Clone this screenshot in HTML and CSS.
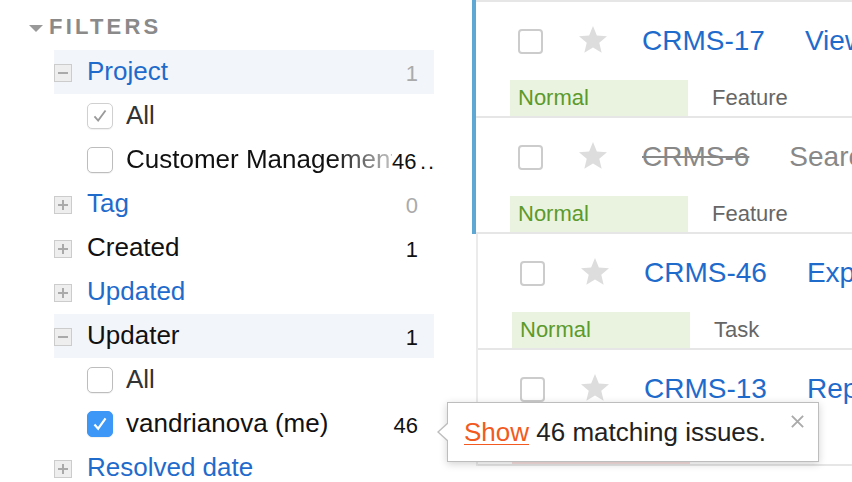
FILE: index.html
```html
<!DOCTYPE html>
<html>
<head>
<meta charset="utf-8">
<link rel="stylesheet" href="styles.css">
</head>
<body>
<div class="page">
  <aside class="filters">
    <div class="filters-head"><span class="caret"></span><span class="filters-title">Filters</span></div>
    <ul class="facets">
      <li class="facet open">
        <svg class="tog" viewBox="0 0 18 18"><rect x="0.5" y="0.5" width="17" height="17" fill="#eeeeee" stroke="#cccccc"/><rect x="4" y="8" width="10" height="2" fill="#aaaaaa"/></svg>
        <span class="facet-name link">Project</span><span class="count muted">1</span>
      </li>
      <li class="opt">
        <span class="cb cb-gray"><svg viewBox="0 0 26 26"><path d="M7 13.5l4 4.5 8-11" fill="none" stroke="#9a9a9a" stroke-width="2"/></svg></span>
        <span class="opt-name grey">All</span>
      </li>
      <li class="opt">
        <span class="cb"></span>
        <span class="opt-name fade">Customer Management</span><span class="count">46</span><span class="dots">..</span>
      </li>
      <li class="facet">
        <svg class="tog" viewBox="0 0 18 18"><rect x="0.5" y="0.5" width="17" height="17" fill="#eeeeee" stroke="#cccccc"/><rect x="4" y="8" width="10" height="2" fill="#aaaaaa"/><rect x="8" y="4" width="2" height="10" fill="#aaaaaa"/></svg>
        <span class="facet-name link">Tag</span><span class="count muted">0</span>
      </li>
      <li class="facet">
        <svg class="tog" viewBox="0 0 18 18"><rect x="0.5" y="0.5" width="17" height="17" fill="#eeeeee" stroke="#cccccc"/><rect x="4" y="8" width="10" height="2" fill="#aaaaaa"/><rect x="8" y="4" width="2" height="10" fill="#aaaaaa"/></svg>
        <span class="facet-name">Created</span><span class="count">1</span>
      </li>
      <li class="facet">
        <svg class="tog" viewBox="0 0 18 18"><rect x="0.5" y="0.5" width="17" height="17" fill="#eeeeee" stroke="#cccccc"/><rect x="4" y="8" width="10" height="2" fill="#aaaaaa"/><rect x="8" y="4" width="2" height="10" fill="#aaaaaa"/></svg>
        <span class="facet-name link">Updated</span>
      </li>
      <li class="facet open">
        <svg class="tog" viewBox="0 0 18 18"><rect x="0.5" y="0.5" width="17" height="17" fill="#eeeeee" stroke="#cccccc"/><rect x="4" y="8" width="10" height="2" fill="#aaaaaa"/></svg>
        <span class="facet-name">Updater</span><span class="count">1</span>
      </li>
      <li class="opt">
        <span class="cb"></span>
        <span class="opt-name grey">All</span>
      </li>
      <li class="opt">
        <span class="cb cb-blue"><svg viewBox="0 0 26 26"><path d="M7 13.5l4 4.5 8-11" fill="none" stroke="#ffffff" stroke-width="2.4"/></svg></span>
        <span class="opt-name">vandrianova (me)</span><span class="count">46</span>
      </li>
      <li class="facet">
        <svg class="tog" viewBox="0 0 18 18"><rect x="0.5" y="0.5" width="17" height="17" fill="#eeeeee" stroke="#cccccc"/><rect x="4" y="8" width="10" height="2" fill="#aaaaaa"/><rect x="8" y="4" width="2" height="10" fill="#aaaaaa"/></svg>
        <span class="facet-name link">Resolved date</span>
      </li>
    </ul>
  </aside>

  <main class="issues">
    <div class="issue selected first">
      <div class="issue-body">
        <div class="issue-top">
          <span class="icb"></span>
          <svg class="star" viewBox="0 0 24 24"><polygon points="12,1.5 14.9,8.6 22.5,9.2 16.7,14.1 18.5,21.6 12,17.6 5.5,21.6 7.3,14.1 1.5,9.2 9.1,8.6" fill="#dddddd"/></svg>
          <span class="key">CRMS-17</span><span class="summary">View customer list</span>
        </div>
        <div class="issue-meta"><span class="prio">Normal</span><span class="type">Feature</span></div>
      </div>
    </div>
    <div class="issue selected">
      <div class="issue-body">
        <div class="issue-top">
          <span class="icb"></span>
          <svg class="star" viewBox="0 0 24 24"><polygon points="12,1.5 14.9,8.6 22.5,9.2 16.7,14.1 18.5,21.6 12,17.6 5.5,21.6 7.3,14.1 1.5,9.2 9.1,8.6" fill="#dddddd"/></svg>
          <span class="key resolved">CRMS-6</span><span class="summary resolved-sum">Search customers</span>
        </div>
        <div class="issue-meta"><span class="prio">Normal</span><span class="type">Feature</span></div>
      </div>
    </div>
    <div class="issue">
      <div class="issue-body">
        <div class="issue-top">
          <span class="icb"></span>
          <svg class="star" viewBox="0 0 24 24"><polygon points="12,1.5 14.9,8.6 22.5,9.2 16.7,14.1 18.5,21.6 12,17.6 5.5,21.6 7.3,14.1 1.5,9.2 9.1,8.6" fill="#dddddd"/></svg>
          <span class="key">CRMS-46</span><span class="summary">Export contacts</span>
        </div>
        <div class="issue-meta"><span class="prio">Normal</span><span class="type">Task</span></div>
      </div>
    </div>
    <div class="issue">
      <div class="issue-body">
        <div class="issue-top">
          <span class="icb"></span>
          <svg class="star" viewBox="0 0 24 24"><polygon points="12,1.5 14.9,8.6 22.5,9.2 16.7,14.1 18.5,21.6 12,17.6 5.5,21.6 7.3,14.1 1.5,9.2 9.1,8.6" fill="#dddddd"/></svg>
          <span class="key">CRMS-13</span><span class="summary">Reports</span>
        </div>
        <div class="issue-meta"><span class="prio critical"></span></div>
      </div>
    </div>
  </main>

  <div class="popup">
    <span class="popup-arrow"></span>
    <span class="popup-text"><a class="show-link">Show</a> 46 matching issues.</span>
    <svg class="popup-close" viewBox="0 0 16 16"><path d="M2 2l12 12M14 2L2 14" stroke="#aaaaaa" stroke-width="2"/></svg>
  </div>
</div>
</body>
</html>
```

FILE: styles.css
```css
* { box-sizing: border-box; }
html, body { margin: 0; padding: 0; background: #ffffff; }
body {
  width: 852px;
  height: 482px;
  overflow: hidden;
  font-family: "Liberation Sans", Arial, sans-serif;
  color: #111111;
}
.page {
  position: relative;
  display: flex;
  width: 852px;
  height: 482px;
}

/* ---------- filters ---------- */
.filters {
  width: 472px;
  flex: none;
}
.filters-head {
  height: 50px;
  display: flex;
  align-items: center;
  padding-left: 29px;
  padding-top: 4px;
}
.caret {
  width: 0;
  height: 0;
  border-left: 7px solid transparent;
  border-right: 7px solid transparent;
  border-top: 7px solid #999999;
  margin-right: 6px;
  margin-top: 2px;
}
.filters-title {
  font-size: 22px;
  font-weight: bold;
  text-transform: uppercase;
  letter-spacing: 3.2px;
  color: #8a8a8a;
}
.facets {
  list-style: none;
  margin: 0 0 0 54px;
  padding: 0;
  width: 380px;
}
.facets li {
  position: relative;
  height: 44px;
  display: flex;
  align-items: center;
  padding-right: 16px;
}
.facet.open { background: #f2f5fa; }
.tog {
  width: 18px;
  height: 18px;
  flex: none;
  margin-right: 15px;
  margin-top: 2px;
}
.facet-name {
  flex: 1;
  font-size: 26px;
  color: #111111;
  white-space: nowrap;
  margin-top: -1px;
}
.link { color: #1f6bcc; }
.count {
  font-size: 22px;
  color: #111111;
  margin-top: 3px;
}
.count.muted { color: #aaaaaa; }
.opt { padding-left: 33px; }
.cb {
  width: 26px;
  height: 26px;
  flex: none;
  border: 1px solid #bdbdbd;
  border-radius: 5px;
  background: #ffffff;
  box-shadow: 0 1px 1px rgba(0,0,0,0.06);
  margin-right: 13px;
  display: flex;
}
.cb svg { width: 100%; height: 100%; }
.cb-gray { border-color: #d0d0d0; }
.cb-blue { background: #3d97f6; border-color: #3d97f6; }
.opt-name {
  flex: 1;
  font-size: 26px;
  white-space: nowrap;
  overflow: hidden;
  margin-top: -1px;
}
.opt-name.grey { color: #333333; }
.opt-name.fade {
  flex: none;
  width: 266px;
  -webkit-mask-image: linear-gradient(to right, #000 78%, rgba(0,0,0,0.25) 100%);
  mask-image: linear-gradient(to right, #000 78%, rgba(0,0,0,0.25) 100%);
}
.dots {
  position: absolute;
  left: 366px;
  top: 11px;
  font-size: 22px;
  letter-spacing: 2px;
}

/* ---------- issues ---------- */
.issues {
  flex: 1;
  min-width: 0;
}
.issue {
  margin-left: 4px;
  border-left: 2px solid #ebebeb;
}
.issue.selected {
  margin-left: 0;
  border-left: 4px solid #5ea8d3;
}
.issue-body {
  border-bottom: 2px solid #e6e6e6;
  padding-left: 34px;
  height: 116px;
}
.issue.first .issue-body {
  border-top: 2px solid #e6e6e6;
  height: 118px;
}
.issue-top {
  height: 78px;
  display: flex;
  align-items: center;
  padding-left: 8px;
  white-space: nowrap;
  overflow: hidden;
}
.icb {
  width: 25px;
  height: 25px;
  flex: none;
  border: 2px solid #cccccc;
  border-radius: 4px;
  margin-right: 34px;
}
.star {
  width: 32px;
  height: 32px;
  flex: none;
  margin-right: 33px;
  margin-top: -2px;
}
.key {
  font-size: 28px;
  color: #1f6bcc;
  margin-right: 40px;
}
.key.resolved {
  color: #888888;
  text-decoration: line-through;
}
.summary {
  font-size: 28px;
  color: #1f6bcc;
}
.summary.resolved-sum { color: #888888; }
.issue-meta {
  height: 36px;
  display: flex;
  align-items: center;
  font-size: 22px;
}
.prio {
  width: 178px;
  height: 36px;
  padding-left: 8px;
  display: flex;
  align-items: center;
  background: #eaf3df;
  color: #5c9a2c;
}
.prio.critical {
  background: #f8dede;
}
.type {
  padding-left: 24px;
  color: #666666;
}

/* ---------- popup ---------- */
.popup {
  position: absolute;
  left: 447px;
  top: 402px;
  width: 372px;
  height: 60px;
  background: #ffffff;
  border: 1px solid #bdbdbd;
  box-shadow: 0 2px 8px rgba(0,0,0,0.18);
  display: flex;
  align-items: center;
  padding-left: 16px;
}
.popup-arrow {
  position: absolute;
  left: -11px;
  top: 19px;
  width: 0;
  height: 0;
  border-top: 10px solid transparent;
  border-bottom: 10px solid transparent;
  border-right: 11px solid #bdbdbd;
}
.popup-arrow::after {
  content: "";
  position: absolute;
  left: 2px;
  top: -9px;
  border-top: 9px solid transparent;
  border-bottom: 9px solid transparent;
  border-right: 10px solid #ffffff;
}
.popup-text {
  font-size: 26px;
  color: #222222;
  white-space: nowrap;
}
.show-link {
  color: #f25a22;
  text-decoration: underline;
  text-decoration-thickness: 1px;
  text-underline-offset: 3px;
}
.popup-close {
  position: absolute;
  right: 13px;
  top: 11px;
  width: 15px;
  height: 15px;
}
```
